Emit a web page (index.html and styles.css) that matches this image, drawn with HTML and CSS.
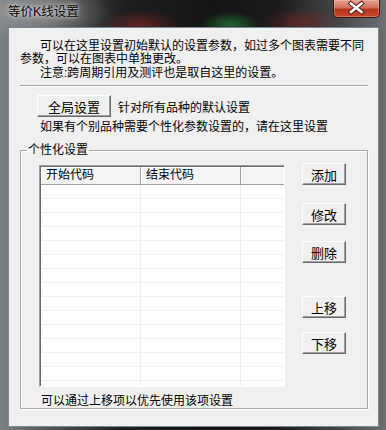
FILE: index.html
```html
<!DOCTYPE html>
<html lang="zh-CN">
<head>
    <meta charset="UTF-8">
    <title>等价K线设置</title>
    <link rel="stylesheet" href="styles.css">
</head>
<body>
    <div class="window">
        <div class="titlebar">
            <span class="title">等价K线设置</span>
            <div class="close-btn">
                <svg width="47" height="18" viewBox="0 0 47 18">
                    <path d="M18 4.5 L28.5 13 M28.5 4.5 L18 13" stroke="#5a1f14" stroke-width="4.6" stroke-linecap="square"/>
                    <path d="M18 4.5 L28.5 13 M28.5 4.5 L18 13" stroke="#ffffff" stroke-width="2.6" stroke-linecap="square"/>
                </svg>
            </div>
        </div>

        <div class="client">
            <p class="intro">可以在这里设置初始默认的设置参数，如过多个图表需要不同参数，可以在图表中单独更改。</p>
            <p class="intro note">注意:跨周期引用及测评也是取自这里的设置。</p>
            <div class="separator"></div>

            <div class="global-row">
                <button class="button global-btn">全局设置</button>
                <span>针对所有品种的默认设置</span>
            </div>
            <p class="hint">如果有个别品种需要个性化参数设置的，请在这里设置</p>

            <fieldset class="group">
                <legend>个性化设置</legend>
                <div class="group-body">
                    <div class="list">
                        <div class="list-header">
                            <div class="head c1">开始代码</div>
                            <div class="head c2">结束代码</div>
                            <div class="head c3"></div>
                        </div>
                        <div class="list-rows">
                            <div class="row"><div class="cell c1"></div><div class="cell c2"></div><div class="cell c3"></div></div>
                            <div class="row"><div class="cell c1"></div><div class="cell c2"></div><div class="cell c3"></div></div>
                            <div class="row"><div class="cell c1"></div><div class="cell c2"></div><div class="cell c3"></div></div>
                            <div class="row"><div class="cell c1"></div><div class="cell c2"></div><div class="cell c3"></div></div>
                            <div class="row"><div class="cell c1"></div><div class="cell c2"></div><div class="cell c3"></div></div>
                            <div class="row"><div class="cell c1"></div><div class="cell c2"></div><div class="cell c3"></div></div>
                            <div class="row"><div class="cell c1"></div><div class="cell c2"></div><div class="cell c3"></div></div>
                            <div class="row"><div class="cell c1"></div><div class="cell c2"></div><div class="cell c3"></div></div>
                            <div class="row"><div class="cell c1"></div><div class="cell c2"></div><div class="cell c3"></div></div>
                            <div class="row"><div class="cell c1"></div><div class="cell c2"></div><div class="cell c3"></div></div>
                            <div class="row"><div class="cell c1"></div><div class="cell c2"></div><div class="cell c3"></div></div>
                            <div class="row"><div class="cell c1"></div><div class="cell c2"></div><div class="cell c3"></div></div>
                            <div class="row"><div class="cell c1"></div><div class="cell c2"></div><div class="cell c3"></div></div>
                            <div class="row"><div class="cell c1"></div><div class="cell c2"></div><div class="cell c3"></div></div>
                            <div class="row"><div class="cell c1"></div><div class="cell c2"></div><div class="cell c3"></div></div>
                        </div>
                    </div>
                    <div class="side-buttons">
                        <button class="button side-btn">添加</button>
                        <button class="button side-btn gap-edit">修改</button>
                        <button class="button side-btn gap-delete">删除</button>
                        <button class="button side-btn gap-up">上移</button>
                        <button class="button side-btn gap-down">下移</button>
                    </div>
                </div>
                <p class="footnote">可以通过上移项以优先使用该项设置</p>
            </fieldset>
        </div>
    </div>
</body>
</html>
```

FILE: styles.css
```css
body {
    margin: 0;
    padding: 0;
    font-family: "Liberation Sans", "Noto Sans CJK SC", sans-serif;
    font-size: 12px;
    color: #000;
    background: #3a3c3e;
}

.window {
    width: 386px;
    height: 430px;
    display: flex;
    flex-direction: column;
    box-sizing: border-box;
    background:
        radial-gradient(ellipse 40px 14px at 140px 24px, rgba(150, 40, 40, 0.55), transparent),
        radial-gradient(ellipse 30px 12px at 230px 24px, rgba(40, 160, 70, 0.55), transparent),
        radial-gradient(ellipse 40px 14px at 300px 22px, rgba(140, 40, 40, 0.5), transparent),
        radial-gradient(ellipse 70px 30px at 40px 12px, rgba(190, 190, 190, 0.55), transparent),
        linear-gradient(90deg, #7b8085 0%, #55585b 12%, #1e1f20 32%, #141414 55%, #1b1b1b 72%, #47484a 88%, #6c7075 100%);
}

.titlebar {
    height: 27px;
    display: flex;
    justify-content: space-between;
    align-items: flex-start;
}

.title {
    margin: 4px 0 0 8px;
    font-size: 12.5px;
    line-height: 16px;
    color: #000;
    text-shadow: 0 0 6px rgba(235, 235, 235, 0.9), 0 0 3px rgba(235, 235, 235, 0.9);
}

.close-btn {
    width: 47px;
    height: 18px;
    margin-right: 6px;
    box-sizing: border-box;
    border: 1px solid #3b1710;
    border-top: none;
    border-radius: 0 0 5px 5px;
    background: linear-gradient(#e6a393 0%, #d0705a 45%, #b5341c 55%, #c9472c 100%);
    box-shadow: inset 0 0 0 1px rgba(255, 200, 180, 0.35);
    overflow: hidden;
}

.close-btn svg {
    display: block;
    margin: -1px 0 0 -1px;
}

.client {
    flex: 1;
    margin: 0 7px 3px 8px;
    padding: 12px 10px 0 11px;
    background: #f0f0f0;
    border: 1px solid #7a8794;
}

.intro {
    margin: 0;
    line-height: 13px;
    text-indent: 20px;
    width: 346px;
}

.note {
    margin-top: 1px;
}

.separator {
    margin-top: 5px;
    height: 0;
    border-top: 1px solid #a0a0a0;
    border-bottom: 1px solid #fff;
}

.global-row {
    display: flex;
    align-items: center;
    margin-top: 8px;
    padding-left: 17px;
    gap: 7px;
}

.button {
    font-family: inherit;
    font-size: 12px;
    height: 22px;
    padding: 0;
    color: #000;
    background: #f0f0f0;
    border: 1px solid;
    border-color: #fff #696969 #696969 #fff;
    box-shadow: inset -1px -1px 0 #a0a0a0;
    border-radius: 0;
    cursor: pointer;
}

.global-btn {
    width: 74px;
    font-size: 13px;
}

.hint {
    margin: 4px 0 0 20px;
    line-height: 13px;
}

.group {
    margin: 10px 0 0 0;
    padding: 6px 0 0 18px;
    border: 1px solid #a8a8a8;
    box-shadow: 1px 1px 0 #fff, inset 1px 1px 0 #fff;
    min-width: 0;
}

.group legend {
    margin-left: -12px;
    padding: 0 1px;
    line-height: 13px;
}

.group-body {
    display: flex;
    gap: 17px;
}

.list {
    width: 246px;
    height: 222px;
    margin-top: 2px;
    box-sizing: border-box;
    background: #fff;
    border: 1px solid;
    border-color: #a0a0a0 #fff #fff #a0a0a0;
    box-shadow: inset 1px 1px 0 #696969;
    overflow: hidden;
    padding: 1px 0 0 1px;
}

.list-header {
    display: flex;
    height: 18px;
    box-sizing: border-box;
    border-bottom: 1px solid #a0a0a0;
    background: #f4f4f4;
}

.head {
    box-sizing: border-box;
    height: 17px;
    line-height: 17px;
    padding-left: 5px;
    border-right: 1px solid #a0a0a0;
    box-shadow: inset 1px 1px 0 #fff;
}

.c1 {
    width: 100px;
}

.c2 {
    width: 100px;
}

.c3 {
    flex: 1;
}

.head.c3 {
    border-right: none;
}

.row {
    display: flex;
    height: 14px;
    box-sizing: border-box;
    border-bottom: 1px solid #f0f0f0;
}

.cell {
    box-sizing: border-box;
    border-right: 1px solid #f0f0f0;
}

.cell.c3 {
    border-right: none;
}

.side-buttons {
    display: flex;
    flex-direction: column;
}

.side-btn {
    width: 44px;
    font-size: 13px;
}

.gap-edit {
    margin-top: 18px;
}

.gap-delete {
    margin-top: 16px;
}

.gap-up {
    margin-top: 33px;
}

.gap-down {
    margin-top: 14px;
}

.footnote {
    margin: 8px 0 0 2px;
    line-height: 13px;
}
```
